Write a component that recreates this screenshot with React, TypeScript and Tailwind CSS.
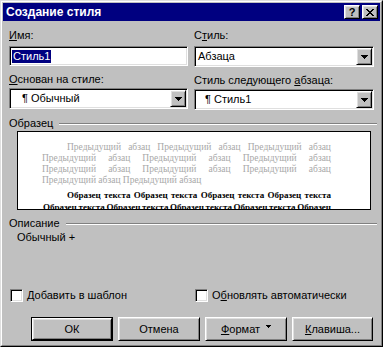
const field =
  "border border-t-[#808080] border-l-[#808080] border-r-white border-b-white bg-white p-px shadow-[inset_1px_1px_0_#000,inset_-1px_-1px_0_#dfdfdf]";
const raised =
  "border border-t-white border-l-white border-r-black border-b-black bg-[#c0c0c0] shadow-[inset_1px_1px_0_#dfdfdf,inset_-1px_-1px_0_#808080]";

function Arrow() {
  return (
    <svg width="7" height="4" viewBox="0 0 7 4" shapeRendering="crispEdges">
      <path d="M0 0h7v1H0zM1 1h5v1H1zM2 2h3v1H2zM3 3h1v1H3z" fill="#000" />
    </svg>
  );
}

function Select({ children, pad }: { children: React.ReactNode; pad: string }) {
  return (
    <div className={`flex h-[21px] ${field}`}>
      <div className={`flex flex-1 items-center ${pad}`}>{children}</div>
      <div className={`flex w-[16px] items-center justify-center ${raised}`}>
        <Arrow />
      </div>
    </div>
  );
}

function Group({ title, gap }: { title: string; gap: string }) {
  return (
    <div className="flex h-[13px] items-center">
      <span>{title}</span>
      <div className={`${gap} h-[2px] flex-1 border-t border-b border-t-[#808080] border-b-white`} />
    </div>
  );
}

function Check({ children }: { children: React.ReactNode }) {
  return (
    <div className="flex items-center">
      <div className={`ml-px h-[13px] w-[13px] ${field}`} />
      <span className="ml-[4px]">{children}</span>
    </div>
  );
}

function Line({ words, className }: { words: string[]; className: string }) {
  return (
    <div className={`flex justify-between whitespace-nowrap ${className}`}>
      {words.map((w, i) => (
        <span key={i}>{w}</span>
      ))}
    </div>
  );
}

export default function App() {
  const prev = ["Предыдущий", "абзац", "Предыдущий", "абзац", "Предыдущий", "абзац"];
  const sample = ["Образец", "текста", "Образец", "текста", "Образец", "текста", "Образец", "текста"];
  return (
    <div className="h-[347px] w-[383px] overflow-hidden font-['Liberation_Sans',Arial,sans-serif] text-[11px] leading-[13px] text-black">
      <div className="h-full border border-t-[#dfdfdf] border-l-[#dfdfdf] border-r-black border-b-black bg-[#c0c0c0]">
        <div className="flex h-full flex-col border border-t-white border-l-white border-r-[#808080] border-b-[#808080] p-px">
          {/* title bar */}
          <div className="flex h-[18px] items-center bg-[#000080] pl-[3px] pr-[2px]">
            <span className="flex-1 text-[12px] font-bold leading-[14px] text-white">Создание стиля</span>
            <div className={`flex h-[14px] w-[16px] items-center justify-center ${raised}`}>
              <span className="text-[11px] font-bold leading-[10px]">?</span>
            </div>
            <div className={`ml-[2px] flex h-[14px] w-[16px] items-center justify-center ${raised}`}>
              <svg width="8" height="7" viewBox="0 0 8 7" shapeRendering="crispEdges">
                <path
                  d="M0 0h2v1H0zM6 0h2v1H6zM1 1h2v1H1zM5 1h2v1H5zM2 2h4v1H2zM3 3h2v1H3zM2 4h4v1H2zM1 5h2v1H1zM5 5h2v1H5zM0 6h2v1H0zM6 6h2v1H6z"
                  fill="#000"
                />
              </svg>
            </div>
          </div>

          <div className="pl-[6px] pr-[3px]">
            <div className="mr-[3px] mt-[8px] grid grid-cols-[179px_180px] gap-x-[6px]">
              <div>
                <div className="h-[13px]">
                  <span className="underline">И</span>мя:
                </div>
                <div className={`mt-[4px] flex h-[20px] items-center ${field}`}>
                  <span className="ml-px bg-[#000080] px-px text-white">Стиль1</span>
                </div>
                <div className="mt-[7px] h-[13px]">
                  <span className="underline">О</span>снован на стиле:
                </div>
                <div className="mt-[2px]">
                  <Select pad="pl-[11px]">¶ Обычный</Select>
                </div>
              </div>
              <div>
                <div className="h-[13px]">
                  С<span className="underline">т</span>иль:
                </div>
                <div className="mt-[4px]">
                  <Select pad="pl-[2px]">Абзаца</Select>
                </div>
                <div className="mt-[7px] h-[13px]">
                  Стиль следующего <span className="underline">а</span>бзаца:
                </div>
                <div className="mt-[2px]">
                  <Select pad="pl-[9px]">¶ Стиль1</Select>
                </div>
              </div>
            </div>

            <div className="mt-[7px]">
              <Group title="Образец" gap="ml-[6px]" />
            </div>
            <div className="ml-[8px] mt-px h-[79px] w-[354px] overflow-hidden border border-black bg-white pl-[24px] pr-[39px] pt-[10px] font-['Liberation_Serif','Times_New_Roman',serif]">
              <div className="text-[9.5px] leading-[11px] text-[#a8a8a8]">
                <Line words={prev} className="pl-[25px]" />
                <Line words={prev} className="" />
                <Line words={prev} className="" />
                <div className="whitespace-nowrap">Предыдущий абзац Предыдущий абзац</div>
              </div>
              <div className="mt-[3px] text-[9px] font-bold leading-[12px]">
                <Line words={sample} className="pl-[25px]" />
                <Line words={[...sample, "Образец"]} className="pl-px" />
              </div>
            </div>

            <div className="mt-[7px]">
              <Group title="Описание" gap="ml-[6px]" />
            </div>
            <div className="ml-[8px] mt-px h-[13px]">Обычный +</div>

            <div className="mr-[3px] mt-[45px] grid grid-cols-[179px_180px] gap-x-[6px]">
              <Check>
                <span className="underline">Д</span>обавить в шаблон
              </Check>
              <Check>
                О<span className="underline">б</span>новлять автоматически
              </Check>
            </div>

            <div className="mr-[4px] mt-[15px] flex justify-end gap-[5px]">
              <div className="h-[24px] w-[82px] border border-black">
                <div className={`flex h-full items-center justify-center ${raised}`}>ОК</div>
              </div>
              <div className={`flex h-[24px] w-[82px] items-center justify-center ${raised}`}>Отмена</div>
              <div className={`flex h-[24px] w-[82px] items-center justify-center ${raised}`}>
                <span>
                  <span className="underline">Ф</span>ормат
                </span>
                <span className="mb-[5px] ml-[6px] flex">
                  <svg width="5" height="3" viewBox="0 0 5 3" shapeRendering="crispEdges">
                    <path d="M0 0h5v1H0zM1 1h3v1H1zM2 2h1v1H2z" fill="#000" />
                  </svg>
                </span>
              </div>
              <div className={`flex h-[24px] w-[81px] items-center justify-center ${raised}`}>
                <span>
                  <span className="underline">К</span>лавиша...
                </span>
              </div>
            </div>
          </div>
        </div>
      </div>
    </div>
  );
}
